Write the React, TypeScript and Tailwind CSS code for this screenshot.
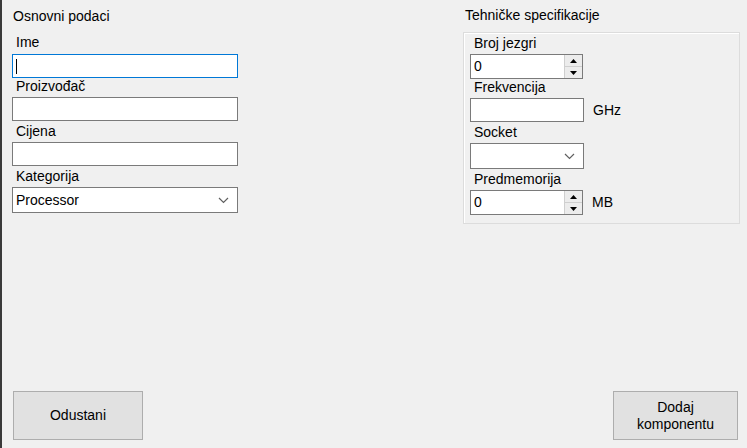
const font = { fontFamily: '"Liberation Sans", Arial, sans-serif' };

function Label({ text, className = "" }: { text: string; className?: string }) {
  return <div className={`h-[16px] text-[14px] leading-[16px] text-black ${className}`}>{text}</div>;
}

function TextBox({ w, focused = false, value = "" }: { w: string; focused?: boolean; value?: string }) {
  return (
    <div
      className={`${w} h-[24px] bg-white border flex items-center px-[3px] text-[14px] ${
        focused ? "border-[#0078d7]" : "border-[#7a7a7a]"
      }`}
    >
      {focused && <div className="w-px h-[15px] bg-black" />}
      {value}
    </div>
  );
}

function Combo({ w, value = "" }: { w: string; value?: string }) {
  return (
    <div className={`${w} h-[26px] bg-white border border-[#7a7a7a] flex items-center justify-between pl-[3px] pr-[8px] text-[14px]`}>
      <span>{value}</span>
      <svg width="11" height="7" viewBox="0 0 11 7">
        <path d="M1 1 L5.5 5.5 L10 1" fill="none" stroke="#606060" strokeWidth="1.2" />
      </svg>
    </div>
  );
}

function Numeric() {
  return (
    <div className="w-[113px] h-[25px] bg-white border border-[#7a7a7a] flex items-stretch text-[14px]">
      <div className="flex-1 flex items-center pl-[3px]">0</div>
      <div className="w-[18px] flex flex-col border-l border-[#cfcfcf] bg-[#ececec]">
        <div className="flex-1 flex items-center justify-center border-b border-[#cfcfcf]">
          <svg width="7" height="4" viewBox="0 0 7 4">
            <path d="M0 4 L3.5 0 L7 4 Z" fill="#000" />
          </svg>
        </div>
        <div className="flex-1 flex items-center justify-center">
          <svg width="7" height="4" viewBox="0 0 7 4">
            <path d="M0 0 L3.5 4 L7 0 Z" fill="#000" />
          </svg>
        </div>
      </div>
    </div>
  );
}

function WinButton({ w, children }: { w: string; children: React.ReactNode }) {
  return (
    <button className={`${w} h-[49px] bg-[#e1e1e1] border border-[#adadad] text-[14px] leading-[17px] text-black`}>
      {children}
    </button>
  );
}

export default function App() {
  return (
    <div
      style={font}
      className="w-[747px] h-[448px] bg-[#f0f0f0] border-l-2 border-[#3a3a3a] flex flex-col overflow-hidden"
    >
      <div className="flex flex-1">
        {/* Osnovni podaci */}
        <div className="pl-[10px] pt-[8px] w-[240px]">
          <Label text="Osnovni podaci" className="ml-[1px]" />
          <Label text="Ime" className="ml-[4px] mt-[10px]" />
          <div className="mt-[4px]">
            <TextBox w="w-[226px]" focused />
          </div>
          <Label text="Proizvođač" className="ml-[4px]" />
          <div className="mt-[3px]">
            <TextBox w="w-[226px]" />
          </div>
          <Label text="Cijena" className="ml-[4px] mt-[2px]" />
          <div className="mt-[3px]">
            <TextBox w="w-[226px]" />
          </div>
          <Label text="Kategorija" className="ml-[4px] mt-[2px]" />
          <div className="mt-[3px]">
            <Combo w="w-[226px]" value="Processor" />
          </div>
        </div>

        {/* Tehničke specifikacije */}
        <div className="ml-[221px] pt-[7px]">
          <Label text="Tehničke specifikacije" className="ml-[2px]" />
          <div className="mt-[9px] w-[277px] h-[192px] border border-[#dcdcdc] shadow-[inset_1px_1px_0_#ffffff] pl-[6px] pt-[2px]">
            <Label text="Broj jezgri" className="ml-[4px]" />
            <div className="mt-[3px]">
              <Numeric />
            </div>
            <Label text="Frekvencija" className="ml-[4px]" />
            <div className="mt-[3px] flex items-center gap-[9px]">
              <TextBox w="w-[114px]" />
              <span className="text-[14px]">GHz</span>
            </div>
            <Label text="Socket" className="ml-[4px] mt-[2px]" />
            <div className="mt-[3px]">
              <Combo w="w-[114px]" />
            </div>
            <Label text="Predmemorija" className="ml-[4px] mt-[2px]" />
            <div className="mt-[3px] flex items-center gap-[9px]">
              <Numeric />
              <span className="text-[14px]">MB</span>
            </div>
          </div>
        </div>
      </div>

      <div className="flex justify-between pl-[11px] pr-[9px] pb-[8px]">
        <WinButton w="w-[130px]">Odustani</WinButton>
        <WinButton w="w-[125px]">
          Dodaj
          <br />
          komponentu
        </WinButton>
      </div>
    </div>
  );
}
